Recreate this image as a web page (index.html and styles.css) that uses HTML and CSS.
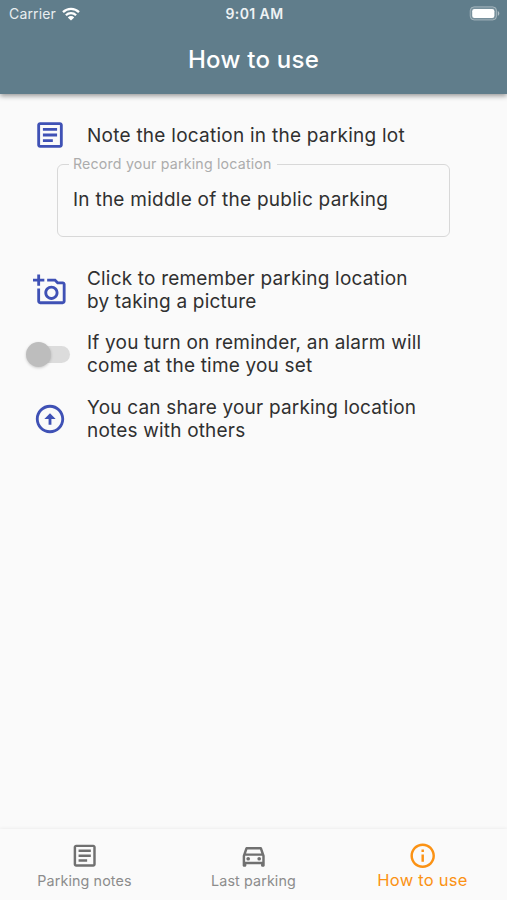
FILE: index.html
```html
<!DOCTYPE html>
<html lang="en">
<head>
    <meta charset="UTF-8">
    <meta name="viewport" content="width=device-width, initial-scale=1.0">
    <title>How to use</title>
    <link rel="stylesheet" href="styles.css">
</head>
<body>
  <header class="header">
    <div class="status_bar">
        <div class="carrier">
            <span>Carrier</span>
            <svg class="wifi" viewBox="0 0 18 14">
                <path d="M1 5.2a11.5 11.5 0 0 1 16 0M3.9 8.2a7.3 7.3 0 0 1 10.2 0" fill="none" stroke="#fff" stroke-width="2.3"/>
                <path d="M9 13.6l-3.2-3.2a4.6 4.6 0 0 1 6.4 0z" fill="#fff"/>
            </svg>
        </div>
        <span class="time">9:01 AM</span>
        <svg class="battery" viewBox="0 0 31 15">
            <rect x="1.2" y=".8" width="26.4" height="13.2" rx="4" fill="#fff" fill-opacity=".15" stroke="#fff" stroke-opacity=".35" stroke-width="1"/>
            <rect x="3.2" y="3" width="22.2" height="9" rx="2.2" fill="#fff"/>
            <path d="M28.8 5v4.8c2-.8 2-4 0-4.8z" fill="#fff" fill-opacity=".5"/>
        </svg>
    </div>
    <h1 class="title">How to use</h1>
  </header>

  <main class="content">
    <div class="row first">
        <div class="icon_box">
            <svg class="icon" viewBox="0 0 24 24"><path d="M19 5v14H5V5h14m0-2H5c-1.1 0-2 .9-2 2v14c0 1.1.9 2 2 2h14c1.1 0 2-.9 2-2V5c0-1.1-.9-2-2-2zM14 17H7v-2h7v2zm3-4H7v-2h10v2zm0-4H7V7h10v2z"/></svg>
        </div>
        <p class="text">Note the location in the parking lot</p>
    </div>
    <fieldset class="field">
        <legend>Record your parking location</legend>
        <p class="text">In the middle of the public parking</p>
    </fieldset>
    <div class="row">
        <div class="icon_box">
            <svg class="icon" viewBox="0 0 24 24"><path d="M21 6h-3.17L16 4h-6v2h5.12l1.83 2H21v12H5v-9H3v9c0 1.1.9 2 2 2h16c1.1 0 2-.9 2-2V8c0-1.1-.9-2-2-2zM8 14c0 2.76 2.24 5 5 5s5-2.24 5-5-2.24-5-5-5-5 2.24-5 5zm5-3c1.65 0 3 1.35 3 3s-1.35 3-3 3-3-1.35-3-3 1.35-3 3-3zM5 6h3V4H5V1H3v3H0v2h3v3h2z"/></svg>
        </div>
        <p class="text">Click to remember parking location<br>by taking a picture</p>
    </div>
    <div class="row">
        <div class="icon_box">
            <div class="switch"><span class="thumb"></span></div>
        </div>
        <p class="text">If you turn on reminder, an alarm will<br>come at the time you set</p>
    </div>
    <div class="row">
        <div class="icon_box">
            <svg class="icon" viewBox="0 0 24 24"><path d="M12 20c-4.41 0-8-3.59-8-8s3.59-8 8-8 8 3.59 8 8-3.59 8-8 8m0 2c5.52 0 10-4.48 10-10S17.52 2 12 2 2 6.48 2 12s4.48 10 10 10zm-1-10v4h2v-4h3l-4-4-4 4h3z"/></svg>
        </div>
        <p class="text">You can share your parking location<br>notes with others</p>
    </div>
  </main>

  <nav class="tab_bar">
    <a class="tab">
        <svg class="tab_icon" viewBox="0 0 24 24"><path d="M19 5v14H5V5h14m0-2H5c-1.1 0-2 .9-2 2v14c0 1.1.9 2 2 2h14c1.1 0 2-.9 2-2V5c0-1.1-.9-2-2-2zM14 17H7v-2h7v2zm3-4H7v-2h10v2zm0-4H7V7h10v2z"/></svg>
        <span>Parking notes</span>
    </a>
    <a class="tab">
        <svg class="tab_icon" viewBox="0 0 24 24"><path d="M18.92 6.01C18.72 5.42 18.16 5 17.5 5h-11c-.66 0-1.21.42-1.42 1.01L3 12v8c0 .55.45 1 1 1h1c.55 0 1-.45 1-1v-1h12v1c0 .55.45 1 1 1h1c.55 0 1-.45 1-1v-8l-2.08-5.99zM6.85 7h10.29l1.08 3.11H5.77L6.85 7zM19 17H5v-5h14v5z"/><circle cx="7.5" cy="14.5" r="1.5"/><circle cx="16.5" cy="14.5" r="1.5"/></svg>
        <span>Last parking</span>
    </a>
    <a class="tab active">
        <svg class="tab_icon" viewBox="0 0 24 24"><path d="M11 7h2v2h-2zm0 4h2v6h-2zm1-9C6.48 2 2 6.48 2 12s4.48 10 10 10 10-4.48 10-10S17.52 2 12 2zm0 18c-4.41 0-8-3.59-8-8s3.59-8 8-8 8 3.59 8 8-3.59 8-8 8z"/></svg>
        <span>How to use</span>
    </a>
  </nav>
</body>
</html>
```
FILE: styles.css
```css
*{
  margin:0;
  padding:0;
  box-sizing: border-box;
}
body{
  height: 900px;
  display: flex;
  flex-direction: column;
  background: #fafafa;
  color: #303030;
  font-family: Inter, "Liberation Sans", sans-serif;
  overflow: hidden;
}
svg{
  display: block;
}
.header{
  height: 94px;
  background: #607d8b;
  color: #fff;
  box-shadow: 0 2px 5px rgba(0,0,0,0.4);
}
.status_bar{
  height: 27px;
  padding: 0 7px 0 9px;
  display: grid;
  grid-template-columns: 1fr auto 1fr;
  align-items: center;
  font-size: 14px;
}
.carrier{
  display: flex;
  align-items: center;
  gap: 6px;
  color: #e9eef0;
  letter-spacing: 0.15px;
}
.wifi{
  width: 18px;
  height: 14px;
}
.time{
  font-weight: 600;
  font-size: 14px;
  letter-spacing: 0.4px;
  color: #eef2f4;
}
.battery{
  width: 31px;
  height: 15px;
  justify-self: end;
}
.title{
  line-height: 66px;
  text-align: center;
  font-size: 24px;
  font-weight: 500;
  letter-spacing: 0.25px;
}
.content{
  flex: 1;
  padding-top: 24px;
}
.row{
  height: 64.5px;
  display: flex;
  align-items: center;
}
.row.first{
  height: 34px;
}
.icon_box{
  flex: none;
  width: 87px;
  padding-left: 13px;
  display: flex;
  justify-content: center;
}
.icon{
  width: 34px;
  height: 34px;
  fill: #3f51b5;
}
.text{
  font-size: 19px;
  line-height: 23.3px;
  letter-spacing: 0.19px;
  white-space: nowrap;
}
.first .text, .field .text{
  letter-spacing: 0.25px;
}
.first .text{
  padding-top: 2px;
}
.field{
  width: 393px;
  height: 81px;
  margin: 4px 0 20.7px 57px;
  padding: 15px 0 0 11px;
  border: 1px solid #d8d8d8;
  border-radius: 6px;
}
.field legend{
  padding: 0 5px 1px 4px;
  font-size: 14.2px;
  line-height: 16px;
  letter-spacing: 0.19px;
  color: #acacac;
}
.field .text{
  padding-left: 4px;
}
.switch{
  width: 40px;
  height: 17px;
  border-radius: 9px;
  background: #dcdcdc;
  display: flex;
  align-items: center;
}
.thumb{
  flex: none;
  width: 25px;
  height: 25px;
  margin-left: -4px;
  border-radius: 50%;
  background: #bdbdbd;
  box-shadow: 0 1px 3px rgba(0,0,0,0.2);
}
.tab_bar{
  height: 71px;
  display: flex;
  box-shadow: 0 -1px 3px rgba(0,0,0,0.05);
}
.tab{
  flex: 1;
  padding-top: 12px;
  display: flex;
  flex-direction: column;
  align-items: center;
  font-size: 14.3px;
  line-height: 22px;
  letter-spacing: 0.12px;
  color: #8c8c8c;
}
.tab_icon{
  width: 29.4px;
  height: 29.4px;
  fill: #707070;
}
.tab.active{
  color: #fb9214;
  font-size: 16.5px;
  line-height: 20px;
  letter-spacing: 0.25px;
}
.active .tab_icon{
  fill: #fb9214;
}
```
